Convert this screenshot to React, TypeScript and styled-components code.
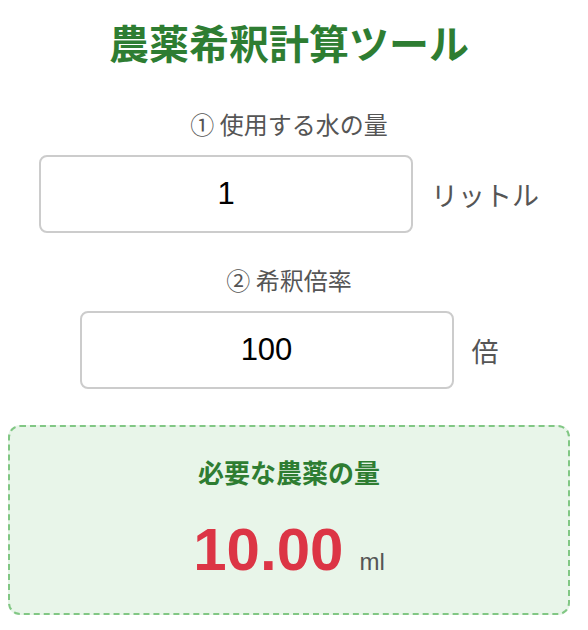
import React, { useState } from "react";
import styled, { createGlobalStyle } from "styled-components";

const Global = createGlobalStyle`
  html, body { margin: 0; padding: 0; background: #ffffff; }
  body { font-family: "Noto Sans CJK JP", "Noto Sans", sans-serif; }
`;

const Page = styled.div`
  width: 562px;
  margin: 0 8px;
  padding-top: 18px;
  display: flex;
  flex-direction: column;
  align-items: center;
  text-align: center;
`;

const Title = styled.h1`
  margin: 0;
  font-size: 40px;
  line-height: 48px;
  font-weight: 700;
  color: #2e7d32;
`;

const Field = styled.div<{ $top: number }>`
  margin-top: ${(p) => p.$top}px;
  display: flex;
  flex-direction: column;
  align-items: center;
  gap: 17px;
`;

const Label = styled.label`
  font-size: 24px;
  line-height: 28px;
  color: #555555;
`;

const InputRow = styled.div`
  display: flex;
  align-items: center;
  gap: 18px;
`;

const NumberInput = styled.input`
  box-sizing: border-box;
  width: 374px;
  height: 78px;
  border: 2px solid #cccccc;
  border-radius: 8px;
  background: #ffffff;
  text-align: center;
  font-family: "Liberation Sans", Arial, sans-serif;
  font-size: 31px;
  color: #000000;
  outline: none;
  padding: 0 10px;
`;

const Unit = styled.span`
  font-size: 27px;
  color: #555555;
  white-space: nowrap;
`;

const ResultBox = styled.div`
  box-sizing: border-box;
  margin-top: 36px;
  width: 562px;
  height: 190px;
  border: 2px dashed #81c784;
  border-radius: 12px;
  background: #e8f5e9;
  padding-top: 30px;
  display: flex;
  flex-direction: column;
  align-items: center;
  gap: 27px;
`;

const ResultTitle = styled.div`
  font-size: 26px;
  line-height: 30px;
  font-weight: 700;
  color: #2e7d32;
`;

const ResultLine = styled.div`
  display: flex;
  align-items: baseline;
  gap: 16px;
  line-height: 72px;
`;

const ResultValue = styled.span`
  font-family: "Liberation Sans", Arial, sans-serif;
  font-size: 60px;
  font-weight: 700;
  color: #dc3545;
`;

const ResultUnit = styled.span`
  font-family: "Liberation Sans", Arial, sans-serif;
  font-size: 24px;
  color: #555555;
`;

export default function App() {
  const [water, setWater] = useState("1");
  const [ratio, setRatio] = useState("100");
  const w = parseFloat(water);
  const r = parseFloat(ratio);
  const amount = w > 0 && r > 0 ? ((w * 1000) / r).toFixed(2) : "0.00";

  return (
    <>
      <Global />
      <Page>
        <Title>農薬希釈計算ツール</Title>
        <Field $top={44}>
          <Label htmlFor="water">① 使用する水の量</Label>
          <InputRow>
            <NumberInput
              id="water"
              type="text"
              inputMode="decimal"
              value={water}
              onChange={(e) => setWater(e.target.value)}
            />
            <Unit>リットル</Unit>
          </InputRow>
        </Field>
        <Field $top={33}>
          <Label htmlFor="ratio">② 希釈倍率</Label>
          <InputRow>
            <NumberInput
              id="ratio"
              type="text"
              inputMode="decimal"
              value={ratio}
              onChange={(e) => setRatio(e.target.value)}
            />
            <Unit>倍</Unit>
          </InputRow>
        </Field>
        <ResultBox>
          <ResultTitle>必要な農薬の量</ResultTitle>
          <ResultLine>
            <ResultValue>{amount}</ResultValue>
            <ResultUnit>ml</ResultUnit>
          </ResultLine>
        </ResultBox>
      </Page>
    </>
  );
}
